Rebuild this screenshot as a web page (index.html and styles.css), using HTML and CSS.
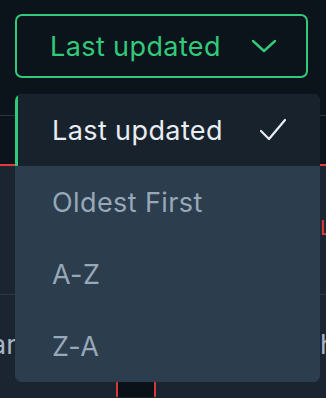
FILE: index.html
```html
<!DOCTYPE html>
<html>
<head>
<meta charset="utf-8">
<link rel="stylesheet" href="styles.css">
</head>
<body>
<div class="page">
  <div class="top">
    <button class="sort-btn">
      <span class="sort-label">Last updated</span>
      <svg class="chev" width="26" height="16" viewBox="0 0 26 16"><path d="M2 3 L13 13 L24 3" fill="none" stroke="#33c97a" stroke-width="2.4" stroke-linecap="round" stroke-linejoin="round"/></svg>
    </button>
  </div>
  <div class="row-dark"></div>
  <div class="row-mid"><span class="red-l">L</span></div>
  <div class="row-text"><span class="t-left">ar</span><span class="t-right">h</span></div>
  <div class="bottom"><div class="cell"></div></div>

  <ul class="menu">
    <li class="item selected"><span>Last updated</span>
      <svg width="28" height="24" viewBox="0 0 28 24"><path d="M2 13 L10 21 L26 2" fill="none" stroke="#e8edf2" stroke-width="2.2" stroke-linecap="round" stroke-linejoin="round"/></svg>
    </li>
    <li class="item"><span>Oldest First</span></li>
    <li class="item"><span>A-Z</span></li>
    <li class="item"><span>Z-A</span></li>
  </ul>
</div>
</body>
</html>
```
FILE: styles.css
```css
* { box-sizing: border-box; }
html, body { margin: 0; padding: 0; }
body {
  background: #1b2531;
  font-family: Inter, "Noto Sans", sans-serif;
  width: 326px;
  height: 398px;
  overflow: hidden;
}
.page { position: relative; width: 326px; height: 398px; }
.top {
  height: 116px;
  background: #0b131b;
  border-bottom: 1px solid #2a3541;
  padding: 14px 0 0 15px;
}
.sort-btn {
  display: flex;
  align-items: center;
  width: 293px;
  height: 64px;
  border: 2px solid #33c97a;
  border-radius: 7px;
  background: #0b131b;
  padding: 0 29px 0 33px;
  font-family: inherit;
  cursor: pointer;
}
.sort-label {
  font-size: 27px;
  color: #33c97a;
  flex: 1;
  text-align: left;
  letter-spacing: 0.4px;
  white-space: nowrap;
}
.chev { display: block; }
.row-dark {
  height: 50px;
  background: #0b131b;
  border-bottom: 2px solid #e0393e;
}
.row-mid {
  height: 129px;
  background: #1b2531;
  border-bottom: 1px solid #2c3743;
  position: relative;
  overflow: hidden;
}
.red-l {
  position: absolute;
  left: 320px;
  top: 52px;
  color: #e0393e;
  font-size: 20px;
  line-height: 1;
}
.row-text {
  height: 86px;
  background: #1b2531;
  position: relative;
  color: #a9b5c1;
  font-size: 27px;
  overflow: hidden;
}
.t-left { position: absolute; left: -9px; top: 33px; }
.t-right { position: absolute; left: 320px; top: 33px; }
.bottom {
  height: 16px;
  background: #1b2531;
  padding-left: 116px;
}
.cell {
  width: 40px;
  height: 16px;
  background: #0a1118;
  border-left: 2px solid #d8373c;
  border-right: 2px solid #d8373c;
}
.menu {
  position: absolute;
  left: 15px;
  top: 94px;
  width: 305px;
  margin: 0;
  padding: 0;
  list-style: none;
  border-radius: 7px;
  overflow: hidden;
  background: #2c3d4d;
}
.item {
  height: 72px;
  display: flex;
  align-items: center;
  justify-content: space-between;
  padding: 0 33px 0 37px;
  font-size: 27px;
  letter-spacing: 0.4px;
  color: #97a8b8;
  background: #2c3d4d;
  white-space: nowrap;
}
.item.selected {
  background: #18222d;
  color: #e8edf2;
  border-left: 3px solid #33c97a;
  padding-left: 34px;
}
```
